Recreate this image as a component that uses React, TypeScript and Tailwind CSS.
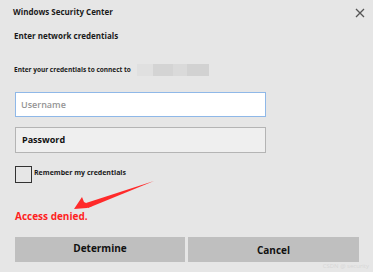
import React from 'react';

const font = { fontFamily: '"Open Sans", "Noto Sans", sans-serif' };

export default function App() {
  return (
    <div className="relative w-[373px] h-[272px] bg-[#e6e6e6] overflow-hidden" style={font}>
      {/* header */}
      <div className="flex items-center justify-between pl-[13px] pr-[8px] pt-[5px] h-[18px]">
        <span className="text-[8px] font-bold text-[#1a1a1a]">Windows Security Center</span>
        <svg width="10" height="10" viewBox="0 0 10 10" className="mt-[2px]">
          <path d="M1 1 L9 9 M9 1 L1 9" stroke="#555" strokeWidth="1.3" />
        </svg>
      </div>

      <div className="pl-[14px] pt-[12px] text-[8px] font-bold text-[#1a1a1a] leading-[12px]">
        Enter network credentials
      </div>

      <div className="flex items-center pl-[14px] pt-[15px] h-[41px]">
        <span className="text-[6.5px] font-bold text-[#1a1a1a]">Enter your credentials to connect to</span>
        <span className="ml-[6px] flex h-[12px]">
          <span className="w-[16px] bg-[#e0e0e0]" />
          <span className="w-[20px] bg-[#d4d4d4]" />
          <span className="w-[14px] bg-[#dadada]" />
          <span className="w-[22px] bg-[#d2d2d2]" />
        </span>
      </div>

      {/* inputs */}
      <div className="flex flex-col gap-[10px] px-[15px] pt-[9px]">
        <div className="w-[251px] h-[25px] bg-white border-[1.5px] border-[#8fb8e8] flex items-center pl-[5px]">
          <span className="text-[9px] font-semibold text-[#959595]">Username</span>
        </div>
        <div className="w-[251px] h-[26px] bg-[#efefef] border-[1.5px] border-[#b4b4b4] flex items-center pl-[6px]">
          <span className="text-[9px] font-bold text-[#111]">Password</span>
        </div>
      </div>

      {/* remember */}
      <div className="flex items-start pl-[15px] pt-[13px] gap-[2px]">
        <div className="w-[17px] h-[17px] border-[1.5px] border-[#333] bg-transparent" />
        <span className="text-[7px] font-bold text-[#1a1a1a] leading-[14px]">Remember my credentials</span>
      </div>

      <div className="pl-[15px] pt-[26px] text-[10px] font-bold text-[#ff1f1f] leading-[14px]">
        Access denied.
      </div>

      {/* buttons */}
      <div className="flex gap-[3px] pl-[15px] pt-[14px]">
        <button className="w-[170px] h-[25px] bg-[#bfbfbf] text-[10px] font-bold text-[#111] pb-[2px]">Determine</button>
        <button className="w-[171px] h-[25px] bg-[#bfbfbf] text-[10px] font-bold text-[#111] pt-[2px]">Cancel</button>
      </div>

      <span className="absolute right-[4px] bottom-[1px] text-[6px] text-[#d6d6d6]">CSDN @ security</span>

      {/* red annotation arrow */}
      <svg className="absolute left-0 top-0" width="373" height="272" viewBox="0 0 373 272">
        <path d="M154 181 L86 203 L88 208 Z" fill="#ff2a2a" />
        <path d="M74 209 L82 197 L84 202 L92 206 L87 208 Z" fill="#ff2a2a" />
      </svg>
    </div>
  );
}
